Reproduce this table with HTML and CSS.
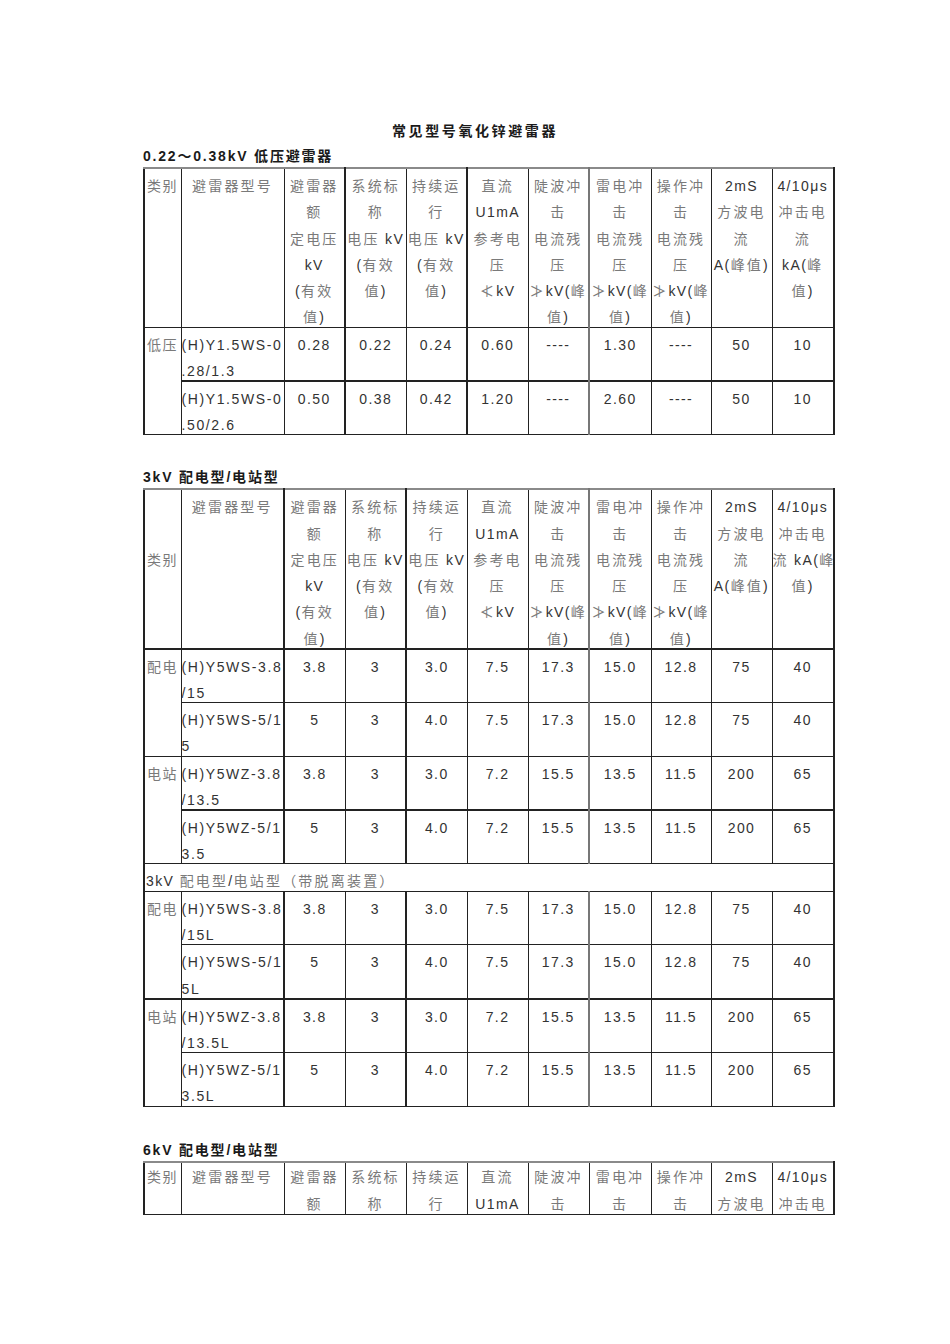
FILE: index.html
```html
<!DOCTYPE html>
<html lang="zh">
<head>
<meta charset="utf-8">
<title>常见型号氧化锌避雷器</title>
<link rel="stylesheet" href="styles.css">
</head>
<body>
<h1 class="title">常见型号氧化锌避雷器</h1>
<div class="page">
  <h2 class="sec sec1">0.22～0.38kV 低压避雷器</h2>
  <table class="tbl">
    <colgroup><col class="c1"><col class="c2"><col class="c3"><col class="c3"><col class="c3"><col class="c3"><col class="c3"><col class="c4"><col class="c5"><col class="c3"><col class="c4"></colgroup>
    <tr class="hd">
      <td class="cat"><div><span class="z">类别</span></div></td>
      <td><div><span class="z">避雷器型号</span></div></td>
      <td><div><span class="z">避雷器</span><br><span class="z">额</span><br><span class="z">定电压</span><br>kV<br>(<span class="z">有效</span><br><span class="z">值</span>)</div></td>
      <td class="tk"><div><span class="z">系统标</span><br><span class="z">称</span><br><span class="z">电压</span> kV<br>(<span class="z">有效</span><br><span class="z">值</span>)</div></td>
      <td><div><span class="z">持续运</span><br><span class="z">行</span><br><span class="z">电压</span> kV<br>(<span class="z">有效</span><br><span class="z">值</span>)</div></td>
      <td class="tk"><div><span class="z">直流</span><br>U1mA<br><span class="z">参考电</span><br><span class="z">压</span><br><span class="z">≮</span>kV</div></td>
      <td><div><span class="z">陡波冲</span><br><span class="z">击</span><br><span class="z">电流残</span><br><span class="z">压</span><br><span class="z">≯</span>kV(<span class="z">峰</span><br><span class="z">值</span>)</div></td>
      <td class="gy"><div><span class="z">雷电冲</span><br><span class="z">击</span><br><span class="z">电流残</span><br><span class="z">压</span><br><span class="z">≯</span>kV(<span class="z">峰</span><br><span class="z">值</span>)</div></td>
      <td><div><span class="z">操作冲</span><br><span class="z">击</span><br><span class="z">电流残</span><br><span class="z">压</span><br><span class="z">≯</span>kV(<span class="z">峰</span><br><span class="z">值</span>)</div></td>
      <td><div>2mS<br><span class="z">方波电</span><br><span class="z">流</span><br>A(<span class="z">峰值</span>)</div></td>
      <td><div>4/10μs<br><span class="z">冲击电</span><br><span class="z">流</span><br>kA(<span class="z">峰</span><br><span class="z">值</span>)</div></td>
    </tr>
    <tr class="dr">
      <td class="cat" rowspan="2"><div><span class="z">低压</span></div></td>
      <td class="mdl"><div>(H)Y1.5WS-0<br>.28/1.3</div></td>
      <td><div>0.28</div></td><td class="tk"><div>0.22</div></td><td><div>0.24</div></td><td class="tk"><div>0.60</div></td><td><div>----</div></td><td class="gy"><div>1.30</div></td><td><div>----</div></td><td><div>50</div></td><td><div>10</div></td>
    </tr>
    <tr class="dr tt">
      <td class="mdl"><div>(H)Y1.5WS-0<br>.50/2.6</div></td>
      <td><div>0.50</div></td><td class="tk"><div>0.38</div></td><td><div>0.42</div></td><td class="tk"><div>1.20</div></td><td><div>----</div></td><td class="gy"><div>2.60</div></td><td><div>----</div></td><td><div>50</div></td><td><div>10</div></td>
    </tr>
  </table>

  <h2 class="sec sec2">3kV 配电型/电站型</h2>
  <table class="tbl">
    <colgroup><col class="c1"><col class="c2"><col class="c3"><col class="c3"><col class="c3"><col class="c3"><col class="c3"><col class="c4"><col class="c5"><col class="c3"><col class="c4"></colgroup>
    <tr class="hd">
      <td class="cat"><div class="cat2"><span class="z">类别</span></div></td>
      <td><div><span class="z">避雷器型号</span></div></td>
      <td class="tk"><div><span class="z">避雷器</span><br><span class="z">额</span><br><span class="z">定电压</span><br>kV<br>(<span class="z">有效</span><br><span class="z">值</span>)</div></td>
      <td><div><span class="z">系统标</span><br><span class="z">称</span><br><span class="z">电压</span> kV<br>(<span class="z">有效</span><br><span class="z">值</span>)</div></td>
      <td class="tk"><div><span class="z">持续运</span><br><span class="z">行</span><br><span class="z">电压</span> kV<br>(<span class="z">有效</span><br><span class="z">值</span>)</div></td>
      <td><div><span class="z">直流</span><br>U1mA<br><span class="z">参考电</span><br><span class="z">压</span><br><span class="z">≮</span>kV</div></td>
      <td><div><span class="z">陡波冲</span><br><span class="z">击</span><br><span class="z">电流残</span><br><span class="z">压</span><br><span class="z">≯</span>kV(<span class="z">峰</span><br><span class="z">值</span>)</div></td>
      <td class="gy"><div><span class="z">雷电冲</span><br><span class="z">击</span><br><span class="z">电流残</span><br><span class="z">压</span><br><span class="z">≯</span>kV(<span class="z">峰</span><br><span class="z">值</span>)</div></td>
      <td><div><span class="z">操作冲</span><br><span class="z">击</span><br><span class="z">电流残</span><br><span class="z">压</span><br><span class="z">≯</span>kV(<span class="z">峰</span><br><span class="z">值</span>)</div></td>
      <td><div>2mS<br><span class="z">方波电</span><br><span class="z">流</span><br>A(<span class="z">峰值</span>)</div></td>
      <td><div>4/10μs<br><span class="z">冲击电</span><br><span class="z">流</span> kA(<span class="z">峰</span><br><span class="z">值</span>)</div></td>
    </tr>
    <tr class="dr tt">
      <td class="cat" rowspan="2"><div><span class="z">配电</span></div></td>
      <td class="mdl"><div>(H)Y5WS-3.8<br>/15</div></td>
      <td class="tk"><div>3.8</div></td><td><div>3</div></td><td class="tk"><div>3.0</div></td><td><div>7.5</div></td><td><div>17.3</div></td><td class="gy"><div>15.0</div></td><td><div>12.8</div></td><td><div>75</div></td><td><div>40</div></td>
    </tr>
    <tr class="dr">
      <td class="mdl"><div>(H)Y5WS-5/1<br>5</div></td>
      <td class="tk"><div>5</div></td><td><div>3</div></td><td class="tk"><div>4.0</div></td><td><div>7.5</div></td><td><div>17.3</div></td><td class="gy"><div>15.0</div></td><td><div>12.8</div></td><td><div>75</div></td><td><div>40</div></td>
    </tr>
    <tr class="dr">
      <td class="cat" rowspan="2"><div><span class="z">电站</span></div></td>
      <td class="mdl"><div>(H)Y5WZ-3.8<br>/13.5</div></td>
      <td class="tk"><div>3.8</div></td><td><div>3</div></td><td class="tk"><div>3.0</div></td><td><div>7.2</div></td><td><div>15.5</div></td><td class="gy"><div>13.5</div></td><td><div>11.5</div></td><td><div>200</div></td><td><div>65</div></td>
    </tr>
    <tr class="dr tt">
      <td class="mdl"><div>(H)Y5WZ-5/1<br>3.5</div></td>
      <td class="tk"><div>5</div></td><td><div>3</div></td><td class="tk"><div>4.0</div></td><td><div>7.2</div></td><td><div>15.5</div></td><td class="gy"><div>13.5</div></td><td><div>11.5</div></td><td><div>200</div></td><td><div>65</div></td>
    </tr>
    <tr class="sr">
      <td colspan="11"><div>3kV <span class="z">配电型</span>/<span class="z">电站型（带脱离装置）</span></div></td>
    </tr>
    <tr class="dr">
      <td class="cat" rowspan="2"><div><span class="z">配电</span></div></td>
      <td class="mdl"><div>(H)Y5WS-3.8<br>/15L</div></td>
      <td class="tk"><div>3.8</div></td><td><div>3</div></td><td class="tk"><div>3.0</div></td><td><div>7.5</div></td><td><div>17.3</div></td><td class="gy"><div>15.0</div></td><td><div>12.8</div></td><td><div>75</div></td><td><div>40</div></td>
    </tr>
    <tr class="dr">
      <td class="mdl"><div>(H)Y5WS-5/1<br>5L</div></td>
      <td class="tk"><div>5</div></td><td><div>3</div></td><td class="tk"><div>4.0</div></td><td><div>7.5</div></td><td><div>17.3</div></td><td class="gy"><div>15.0</div></td><td><div>12.8</div></td><td><div>75</div></td><td><div>40</div></td>
    </tr>
    <tr class="dr tt">
      <td class="cat" rowspan="2"><div><span class="z">电站</span></div></td>
      <td class="mdl"><div>(H)Y5WZ-3.8<br>/13.5L</div></td>
      <td class="tk"><div>3.8</div></td><td><div>3</div></td><td class="tk"><div>3.0</div></td><td><div>7.2</div></td><td><div>15.5</div></td><td class="gy"><div>13.5</div></td><td><div>11.5</div></td><td><div>200</div></td><td><div>65</div></td>
    </tr>
    <tr class="dr">
      <td class="mdl"><div>(H)Y5WZ-5/1<br>3.5L</div></td>
      <td class="tk"><div>5</div></td><td><div>3</div></td><td class="tk"><div>4.0</div></td><td><div>7.2</div></td><td><div>15.5</div></td><td class="gy"><div>13.5</div></td><td><div>11.5</div></td><td><div>200</div></td><td><div>65</div></td>
    </tr>
  </table>

  <h2 class="sec sec3">6kV 配电型/电站型</h2>
  <table class="tbl t3">
    <colgroup><col class="c1"><col class="c2"><col class="c3"><col class="c3"><col class="c3"><col class="c3"><col class="c3"><col class="c4"><col class="c5"><col class="c3"><col class="c4"></colgroup>
    <tr class="hd">
      <td class="cat"><div><span class="z">类别</span></div></td>
      <td><div><span class="z">避雷器型号</span></div></td>
      <td><div><span class="z">避雷器</span><br><span class="z">额</span></div></td>
      <td><div><span class="z">系统标</span><br><span class="z">称</span></div></td>
      <td><div><span class="z">持续运</span><br><span class="z">行</span></div></td>
      <td><div><span class="z">直流</span><br>U1mA</div></td>
      <td><div><span class="z">陡波冲</span><br><span class="z">击</span></div></td>
      <td><div><span class="z">雷电冲</span><br><span class="z">击</span></div></td>
      <td><div><span class="z">操作冲</span><br><span class="z">击</span></div></td>
      <td><div>2mS<br><span class="z">方波电</span></div></td>
      <td><div>4/10μs<br><span class="z">冲击电</span></div></td>
    </tr>
  </table>
</div>
</body>
</html>
```

FILE: styles.css
```css
html, body {
  margin: 0;
  padding: 0;
  background: #ffffff;
}

body {
  font-family: "Liberation Sans", "Noto Sans CJK SC", sans-serif;
  color: #333333;
}

.title {
  margin: 0;
  padding-top: 121px;
  text-align: center;
  font-size: 14px;
  font-weight: bold;
  letter-spacing: 2.6px;
  line-height: 20px;
  color: #1a1a1a;
}

.page {
  width: 691px;
  margin-left: 143px;
}

.sec {
  margin: 0;
  font-size: 14px;
  font-weight: bold;
  letter-spacing: 1.8px;
  line-height: 21px;
  color: #1a1a1a;
}

.sec1 { margin-top: 5px; }
.sec2 { margin-top: 32px; }
.sec3 { margin-top: 33px; }

.tbl {
  width: 691px;
  border-collapse: collapse;
  table-layout: fixed;
  font-size: 14px;
  letter-spacing: 1.4px;
  border-top: 2px solid #8a8a8a;
  border-left: 2px solid #222;
  border-right: 2px solid #222;
  border-bottom: 1px solid #222;
}

.c1 { width: 37px; }
.c2 { width: 103px; }
.c3 { width: 61px; }
.c4 { width: 62px; }
.c5 { width: 60px; }

.tbl td {
  border: 1px solid #222;
  padding: 0;
  vertical-align: top;
  text-align: center;
  overflow: visible;
  white-space: nowrap;
}

.tbl td > div {
  padding-top: 4px;
  margin-bottom: -4px;
}

.hd td > div { line-height: 26.25px; }
.dr td > div { line-height: 26.2px; }
.sr td > div { line-height: 26.5px; text-align: left; padding-left: 1px; }

.tbl td.tk { border-left-width: 2px; }
.tbl td.gy { border-left-color: #777; border-left-width: 2px; }
.tbl tr.tt td { border-top-width: 2px; }

.z {
  color: #7a7a7a;
  font-family: "Noto Sans CJK SC", sans-serif;
  letter-spacing: 2.2px;
  line-height: 14px;
}

.sec .z, .title .z { color: inherit; }

.tbl td.cat { text-align: left; }
.tbl td.cat > div { padding-left: 2px; }
.tbl td.cat .z { letter-spacing: 1.6px; }
.tbl td.cat > div.cat2 { padding-top: 57px; margin-bottom: -57px; }

.tbl td.mdl { text-align: left; }
.tbl td.mdl > div { padding-left: 0; letter-spacing: 1.6px; }

.t3 .hd td > div {
  line-height: 27px;
  padding-top: 1px;
  margin-bottom: -4px;
}
```
